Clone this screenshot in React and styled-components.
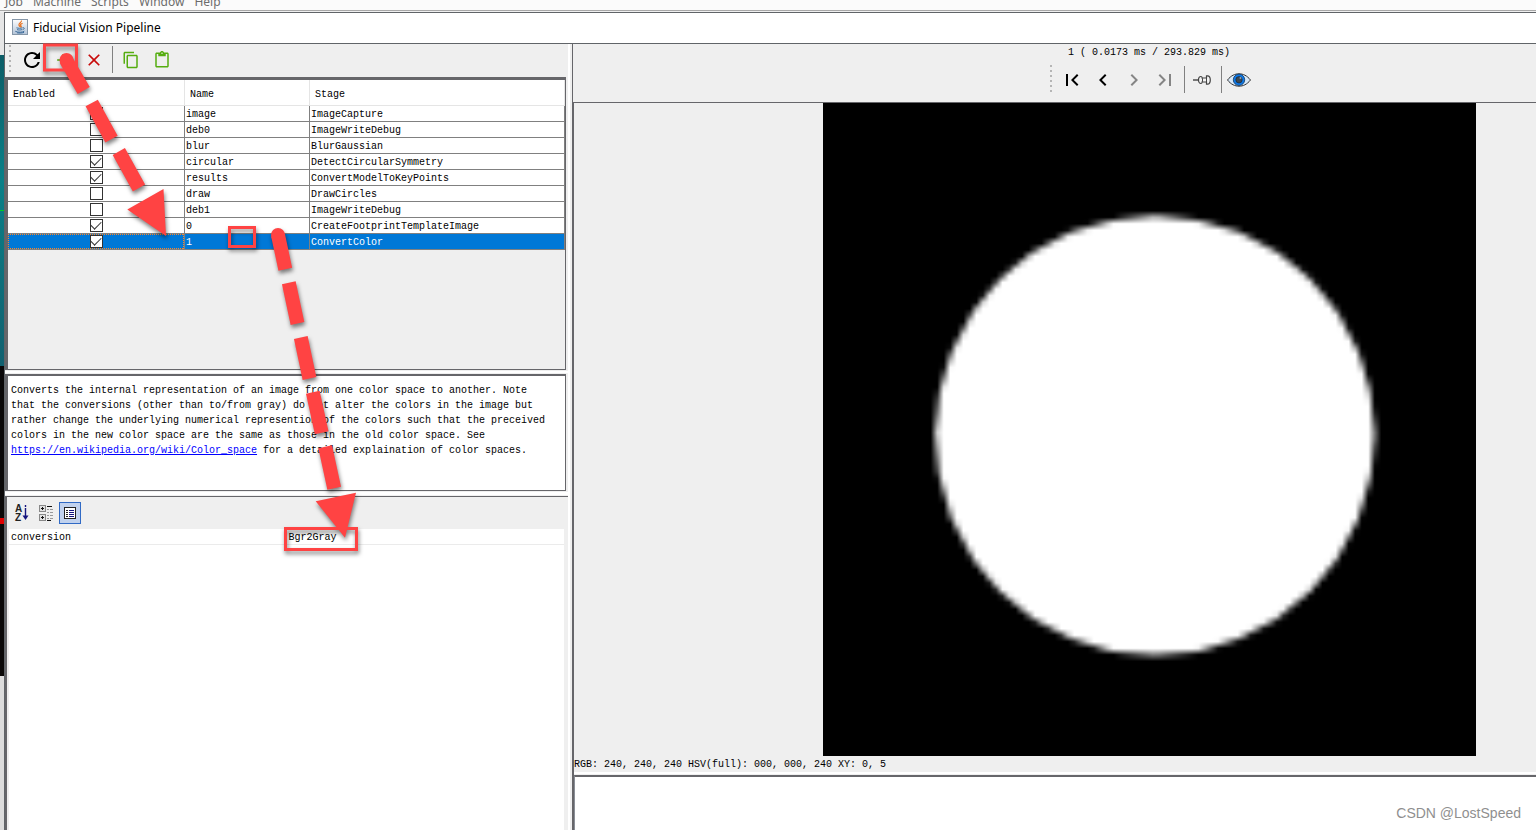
import React, { useEffect, useRef, useState } from 'react';
import styled, { createGlobalStyle, css } from 'styled-components';
import {
    MdRefresh,
    MdAdd,
    MdClose,
    MdContentCopy,
    MdContentPaste,
    MdFirstPage,
    MdChevronLeft,
    MdChevronRight,
    MdLastPage,
} from 'react-icons/md';

const mono = '"Liberation Mono", "Noto Sans CJK SC", monospace';
const sans = '"Noto Sans", "Noto Sans CJK SC", sans-serif';

const GlobalStyle = createGlobalStyle`
    * {
        box-sizing: border-box;
    }
    body {
        margin: 0;
        overflow: hidden;
        background: #efefef;
        color: #000;
        font-family: ${mono};
        font-size: 10px;
        line-height: 15px;
    }
`;

const Screen = styled.div`
    position: relative;
    display: flex;
    flex-direction: column;
    height: 100vh;
    overflow: hidden;
`;

const MenuBar = styled.nav`
    display: flex;
    flex: none;
    align-items: flex-end;
    gap: 10px;
    height: 11px;
    margin-bottom: 1px;
    padding: 0 5px;
    overflow: hidden;
    border-bottom: 1px solid #a8a8a8;
    background: #fbfbfb;
    color: #6c6c6c;
    font-family: ${sans};
    font-size: 12px;
    line-height: 16px;
`;

const Desktop = styled.div`
    display: grid;
    flex: 1;
    grid-template-columns: 4px 1fr;
    min-height: 0;
`;

const HostEdge = styled.div`
    display: flex;
    flex-direction: column;
    overflow: hidden;
`;

const HostBlock = styled.div`
    display: flex;
    flex: ${props => (props.$height ? `0 0 ${props.$height}px` : '1')};
    flex-direction: column;
    justify-content: center;
    background: ${props => props.$fill};
`;

const HostMark = styled.i`
    height: ${props => props.$size}px;
    background: ${props => props.$color};
`;

// the dialog is wider than the screen, its right part runs off the edge
const Dialog = styled.main`
    display: flex;
    flex-direction: column;
    width: calc(100vw + 185px);
    min-height: 0;
    border-top: 1px solid #606468;
    border-left: 1px solid #606468;
    background: #efefef;
`;

const TitleBar = styled.header`
    display: flex;
    flex: none;
    align-items: center;
    gap: 5px;
    height: 31px;
    padding: 0 0 2px 7px;
    border-bottom: 1px solid #606468;
    background: #fff;
    h1 {
        margin: 0;
        font-family: ${sans};
        font-size: 12px;
        font-weight: 400;
    }
`;

const Panes = styled.div`
    display: flex;
    flex: 1;
    min-height: 0;
`;

const LeftPane = styled.div`
    display: flex;
    flex: 0 0 563px;
    flex-direction: column;
`;

const Splitter = styled.div`
    flex: 0 0 4px;
    border-left: 2px solid #fff;
`;

const RightPane = styled.section`
    display: flex;
    flex: 1;
    flex-direction: column;
    min-width: 0;
`;

const Toolbar = styled.div`
    display: flex;
    flex: none;
    align-items: center;
    height: 33px;
    padding: 0 0 2px 4px;
`;

const Grip = styled.span`
    flex: none;
    width: 2px;
    height: 30px;
    margin-right: 5px;
    background: repeating-linear-gradient(#b5b5b5 0 2px, transparent 2px 5px);
`;

const Separator = styled.span`
    flex: none;
    width: 1px;
    height: 27px;
    margin: 0 2px 0 3px;
    background: #808080;
`;

const IconButton = styled.button`
    display: flex;
    align-items: center;
    justify-content: center;
    width: 31px;
    height: 30px;
    padding: 0;
    border: 0;
    background: none;
    color: ${props => props.$color || '#000'};
    svg {
        flex: none;
    }
`;

const Panel = styled.section`
    flex: none;
    margin-right: 2px;
    border: solid #66666a;
    border-width: 2px 1px 1px 3px;
`;

const StagePanel = styled(Panel)`
    height: 293px;
    border-top-width: 3px;
`;

const Gap = styled.div`
    flex: none;
    height: ${props => props.$height || 4}px;
    border-top: 1px solid #efefef;
    border-bottom: 1px solid #efefef;
    background: #fff;
`;

const StageTable = styled.table`
    width: 100%;
    table-layout: fixed;
    border-spacing: 0;
    background: #fff;
    th {
        height: 26px;
        padding: 4px 0 0 5px;
        border-right: 1px solid #e5e5e5;
        border-bottom: 1px solid #e5e5e5;
        font-weight: 400;
        text-align: left;
    }
    th:nth-child(1) {
        width: 177px;
    }
    th:nth-child(2) {
        width: 125px;
    }
`;

const Row = styled.tr`
    td {
        height: 16px;
        padding: 2px 0 0 1px;
        border-right: 1px solid #808080;
        border-bottom: 1px solid #808080;
        line-height: 13px;
    }
    td:first-child {
        padding: 0;
    }
    ${props => props.$selected && css`
        background: #0078d7;
        color: #fff;
        td:first-child {
            background:
                repeating-linear-gradient(90deg, #ff8728 0 1px, transparent 1px 2px) top / 100% 1px no-repeat,
                repeating-linear-gradient(90deg, #ff8728 0 1px, transparent 1px 2px) bottom / 100% 1px no-repeat,
                repeating-linear-gradient(#ff8728 0 1px, transparent 1px 2px) left / 1px 100% no-repeat,
                repeating-linear-gradient(#ff8728 0 1px, transparent 1px 2px) right / 1px 100% no-repeat;
        }
    `}
`;

const Check = styled.input`
    display: grid;
    place-items: center;
    width: 13px;
    height: 13px;
    margin: 1px auto;
    appearance: none;
    border: 1px solid #333;
    background: #fff;
    &:checked::before {
        content: '';
        width: 9px;
        height: 5px;
        margin-bottom: 3px;
        border: solid #333;
        border-width: 0 0 1px 1px;
        transform: rotate(-45deg);
    }
`;

const Description = styled(Panel)`
    height: 117px;
    padding: 7px 12px 0 3px;
    background: #fff;
    p {
        margin: 0;
    }
    a {
        color: #00f;
    }
`;

const Properties = styled.section`
    display: flex;
    flex: 1;
    flex-direction: column;
    padding: 0 4px 0 2px;
    border-top: 1px solid #66666a;
    border-left: 2px solid #66666a;
`;

const SheetTools = styled.div`
    display: flex;
    gap: 2px;
    height: 32px;
    padding: 5px 2px;
`;

const SheetButton = styled(IconButton)`
    width: 22px;
    height: 22px;
    ${props => props.$pressed && css`
        border: 1px solid #316ac5;
        background: #c1d2ee;
    `}
`;

const Sheet = styled.div`
    flex: 1;
    background: #fff;
    table {
        width: 100%;
        table-layout: fixed;
        border-spacing: 0;
    }
    th,
    td {
        height: 16px;
        padding: 2px 0 0 2px;
        border-bottom: 1px solid #ebebeb;
        font-weight: 400;
        line-height: 13px;
        text-align: left;
    }
`;

const ViewerHead = styled.div`
    display: flex;
    flex: none;
    flex-direction: column;
    align-items: center;
    height: 59px;
    padding-top: 1px;
    border-left: 1px solid #66666a;
    border-bottom: 1px solid #66666a;
    white-space: pre;
`;

const ViewerTools = styled(Toolbar)`
    height: 41px;
    padding: 0 0 2px 6px;
`;

const ViewerBody = styled.div`
    display: flex;
    flex: 1;
    flex-direction: column;
    min-height: 0;
    border-left: 2px solid #66666a;
`;

const Viewport = styled.div`
    display: flex;
    flex: 1;
    justify-content: center;
    min-height: 0;
    canvas {
        height: 100%;
        aspect-ratio: 1;
        background: #000;
    }
`;

const Status = styled.div`
    flex: none;
    height: 15px;
    line-height: 17px;
`;

const Log = styled.textarea`
    flex: none;
    height: 55px;
    border: 0;
    border-top: 2px solid #66666a;
    border-left: 1px solid #8a8e96;
    outline: 0;
    resize: none;
    background: #fff;
`;

const Annotations = styled.svg`
    position: absolute;
    top: 0;
    left: 0;
    width: 400px;
    height: 580px;
    overflow: visible;
    pointer-events: none;
    filter: drop-shadow(1px 3px 2px rgba(0, 0, 0, 0.5));
`;

const Watermark = styled.div`
    position: absolute;
    right: 15px;
    bottom: 8px;
    color: #8f8f8f;
    font-family: "Liberation Sans", sans-serif;
    font-size: 14px;
    line-height: 18px;
`;

const JavaIcon = () => (
    <svg width="16" height="16" viewBox="0 0 16 16">
        <defs>
            <linearGradient id="java" x1="0" y1="0" x2="0" y2="1">
                <stop offset="0" stopColor="#fdfdfe" />
                <stop offset="1" stopColor="#b3c4d8" />
            </linearGradient>
        </defs>
        <rect x=".5" y=".5" width="15" height="15" fill="url(#java)" stroke="#8596a8" />
        <path d="M9.500 1.500C10 3.500 6 4 7 6.200c.3.8 1 1 1 1.800M10.600 4.200c-2 .8-2.600 1.500-1.600 2.800.5.600.2 1.200-.4 1.600" fill="none" stroke="#e8701c" strokeWidth="1.200" />
        <path d="M4.500 8.800c1.500.6 4.500.6 6 0M5 10.600c1.500.5 3.800.5 5 0M10.800 8.800c2-.6 2 1.400-.3 1.900M3.300 12.300c2.500 1.400 7.500 1.200 9-.2M5 13.800c2.500.4 5 .2 7-.4" fill="none" stroke="#3f6e9c" strokeWidth="1" />
    </svg>
);

const PinIcon = () => (
    <svg width="18" height="12" viewBox="0 0 18 12" fill="#f4f4f4" stroke="#444">
        <path d="M0 6h6" strokeWidth="1.400" />
        <path d="M5.500 6c0-2 1-3.500 2.500-3.500.8 0 1 .6 1.200 1.500h4.300V1.800h1c1.500 0 2.800 1.500 2.800 4.200s-1.300 4.200-2.800 4.200h-1V8H9.200C9 9 8.800 9.500 8 9.500 6.500 9.500 5.500 8 5.500 6z" strokeWidth="1.200" />
        <path d="M9.200 4c.5 1.300.5 2.700 0 4M13.500 4v4" fill="none" />
    </svg>
);

const EyeIcon = () => (
    <svg width="24" height="14" viewBox="0 0 24 14">
        <path d="M.5 7C4 2.500 8 .8 12 .8S20 2.500 23.500 7C20 11.500 16 13.200 12 13.200S4 11.500.5 7z" fill="#d7e8f8" stroke="#333" />
        <circle cx="12" cy="6.800" r="5.700" fill="#0b78e8" stroke="#12355c" strokeWidth=".8" />
        <circle cx="12" cy="6.800" r="3.200" fill="#3d4852" stroke="#123" strokeWidth=".6" />
        <circle cx="13.500" cy="5" r="1" fill="#8fa5ba" />
    </svg>
);

const SortIcon = () => (
    <svg width="16" height="18" viewBox="0 0 16 18">
        <g fontFamily="Liberation Sans" fontSize="10" fontWeight="700" fill="#222">
            <text x="1" y="8">A</text>
            <text x="1" y="17">Z</text>
        </g>
        <path d="M11.500 1v2M11.500 4v8" stroke="#14147e" strokeWidth="1.400" />
        <path d="M8.500 11.500h6l-3 4.500z" fill="#14147e" />
    </svg>
);

const CategoryIcon = () => (
    <svg width="16" height="18" viewBox="0 0 16 18" fill="none" shapeRendering="crispEdges">
        <path d="M1.500 1.500h6v6h-6zM1.500 10.500h6v6h-6z" fill="#e2e2e2" stroke="#888" />
        <path d="M3 4.500h3M4.500 3v3M3 13.500h3M4.500 12v3M9 2.500h5M9 16.500h4" stroke="#111" />
        <path d="M9 5.500h2M12 5.500h3M9 8.500h2M12 8.500h3M9 11.500h2M12 11.500h3M9 14.500h2M12 14.500h3" stroke="#999" />
    </svg>
);

const ListIcon = () => (
    <svg width="14" height="12" viewBox="0 0 14 12" fill="none" shapeRendering="crispEdges">
        <path d="M1.500.5h11v11h-11z" fill="#fff" stroke="#222" />
        <path d="M3 3.500h2M3 5.500h2M3 7.500h2M3 9.500h2" stroke="#222" />
        <path d="M6 3.500h5M6 5.500h5M6 7.500h5M6 9.500h5" stroke="#14147e" />
    </svg>
);

const stages = [
    { name: 'image', stage: 'ImageCapture', enabled: true },
    { name: 'deb0', stage: 'ImageWriteDebug', enabled: false },
    { name: 'blur', stage: 'BlurGaussian', enabled: false },
    { name: 'circular', stage: 'DetectCircularSymmetry', enabled: true },
    { name: 'results', stage: 'ConvertModelToKeyPoints', enabled: true },
    { name: 'draw', stage: 'DrawCircles', enabled: false },
    { name: 'deb1', stage: 'ImageWriteDebug', enabled: false },
    { name: '0', stage: 'CreateFootprintTemplateImage', enabled: true },
    { name: '1', stage: 'ConvertColor', enabled: true },
];

const StageList = () => {
    const [selected, setSelected] = useState('1');

    return (
        <StageTable>
            <thead>
                <tr>
                    <th>Enabled</th>
                    <th>Name</th>
                    <th>Stage</th>
                </tr>
            </thead>
            <tbody>
                {stages.map(({ name, stage, enabled }) => (
                    <Row key={name} $selected={name === selected} onClick={() => setSelected(name)}>
                        <td><Check type="checkbox" aria-label={name} defaultChecked={enabled} /></td>
                        <td>{name}</td>
                        <td>{stage}</td>
                    </Row>
                ))}
            </tbody>
        </StageTable>
    );
};

// 100 x 100 template, scaled up smoothly by the browser
const Template = () => {
    const ref = useRef(null);

    useEffect(() => {
        const ctx = ref.current.getContext('2d');
        ctx.fillStyle = '#000';
        ctx.fillRect(0, 0, 100, 100);
        ctx.fillStyle = '#fff';
        ctx.beginPath();
        ctx.arc(50.85, 50.85, 33.65, 0, Math.PI * 2);
        ctx.fill();
    }, []);

    return <canvas ref={ref} width="100" height="100" />;
};

const Arrows = () => (
    <Annotations fill="none" stroke="#ff4343" strokeWidth="14" aria-hidden="true">
        <g strokeWidth="3">
            <rect x="44.500" y="45" width="32" height="25" />
            <rect x="229.500" y="227.500" width="25" height="19" />
            <rect x="285.500" y="528.500" width="71" height="21" />
        </g>
        <path d="M66 60L83.700 90.500M91.700 103L111.500 139.200M118.800 151.500L139 188" />
        <path d="M278 235L285.300 269.200M288.800 282.800L297.500 323.500M300.800 337.500L309.500 378.500M312.800 392.200L321.700 432.800M325.200 446.800L334.200 488.200" />
        <g stroke="none" fill="#ff4343">
            <circle cx="66.500" cy="60" r="7" />
            <circle cx="278" cy="235" r="7" />
            <path d="M127.300 209.500L163.500 189L166 236zM315.700 501.300L356 492.700L345 537.700z" />
        </g>
    </Annotations>
);

const App = () => {
    return (
        <Screen>
            <GlobalStyle />
            <MenuBar>
                <span>Job</span>
                <span>Machine</span>
                <span>Scripts</span>
                <span>Window</span>
                <span>Help</span>
            </MenuBar>
            <Desktop>
                <HostEdge>
                    <HostBlock $height={43} $fill="#e6e6e6" />
                    <HostBlock $height={311} $fill="linear-gradient(#0b5c66, #0a8088 40%, #11606f)">
                        <HostMark $size={1} $color="#00d020" />
                    </HostBlock>
                    <HostBlock $height={310} $fill="#0a0808">
                        <HostMark $size={6} $color="#e00000" />
                    </HostBlock>
                    <HostBlock $fill="#dcdcdc" />
                </HostEdge>
                <Dialog>
                    <TitleBar>
                        <JavaIcon />
                        <h1>Fiducial Vision Pipeline</h1>
                    </TitleBar>
                    <Panes>
                        <LeftPane>
                            <Toolbar>
                                <Grip />
                                <IconButton aria-label="Refresh"><MdRefresh size={24} /></IconButton>
                                <IconButton aria-label="Add stage" $color="#4ea80c"><MdAdd size={20} /></IconButton>
                                <IconButton aria-label="Remove stage" $color="#c80a0a"><MdClose size={20} /></IconButton>
                                <Separator />
                                <IconButton aria-label="Copy" $color="#55ad10"><MdContentCopy size={18} /></IconButton>
                                <IconButton aria-label="Paste" $color="#55ad10"><MdContentPaste size={18} /></IconButton>
                            </Toolbar>
                            <StagePanel>
                                <StageList />
                            </StagePanel>
                            <Gap />
                            <Description>
                                <p>
                                    Converts the internal representation of an image from one color space to another.
                                    Note that the conversions (other than to/from gray) do not alter the colors in the
                                    image but rather change the underlying numerical represention of the colors such
                                    that the preceived colors in the new color space are the same as those in the old
                                    color space. See{' '}
                                    <a href="https://en.wikipedia.org/wiki/Color_space">https://en.wikipedia.org/wiki/Color_space</a>
                                    {' '}for a detailed explaination of color spaces.
                                </p>
                            </Description>
                            <Gap $height={5} />
                            <Properties>
                                <SheetTools>
                                    <SheetButton aria-label="Sort"><SortIcon /></SheetButton>
                                    <SheetButton aria-label="Categories"><CategoryIcon /></SheetButton>
                                    <SheetButton aria-label="Description" $pressed><ListIcon /></SheetButton>
                                </SheetTools>
                                <Sheet>
                                    <table>
                                        <tbody>
                                            <tr>
                                                <th scope="row">conversion</th>
                                                <td>Bgr2Gray</td>
                                            </tr>
                                        </tbody>
                                    </table>
                                </Sheet>
                            </Properties>
                        </LeftPane>
                        <Splitter />
                        <RightPane>
                            <ViewerHead>
                                1 ( 0.0173 ms / 293.829 ms)
                                <ViewerTools>
                                    <Grip />
                                    <IconButton aria-label="First"><MdFirstPage size={24} /></IconButton>
                                    <IconButton aria-label="Previous"><MdChevronLeft size={24} /></IconButton>
                                    <IconButton aria-label="Next" $color="#858585"><MdChevronRight size={24} /></IconButton>
                                    <IconButton aria-label="Last" $color="#858585"><MdLastPage size={24} /></IconButton>
                                    <Separator />
                                    <IconButton aria-label="Pin"><PinIcon /></IconButton>
                                    <Separator />
                                    <IconButton aria-label="Show"><EyeIcon /></IconButton>
                                </ViewerTools>
                            </ViewerHead>
                            <ViewerBody>
                                <Viewport>
                                    <Template />
                                </Viewport>
                                <Status>RGB: 240, 240, 240 HSV(full): 000, 000, 240 XY: 0, 5</Status>
                                <Gap />
                                <Log aria-label="Result" readOnly />
                            </ViewerBody>
                        </RightPane>
                    </Panes>
                </Dialog>
            </Desktop>
            <Arrows />
            <Watermark>CSDN @LostSpeed</Watermark>
        </Screen>
    );
};

export default App;
